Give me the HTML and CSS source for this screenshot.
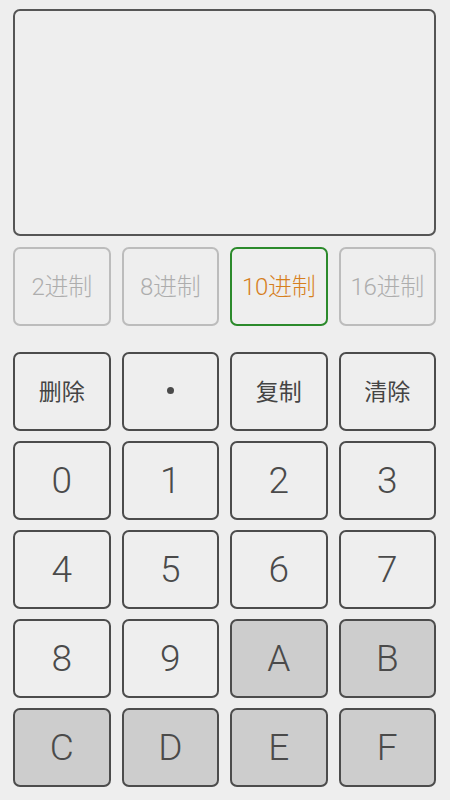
FILE: index.html
```html
<!DOCTYPE html>
<html lang="zh">
<head>
<meta charset="utf-8">
<link rel="stylesheet" href="styles.css">
</head>
<body>
<div class="app">
  <div class="display"></div>
  <div class="modes">
    <div class="mode">2进制</div>
    <div class="mode">8进制</div>
    <div class="mode active">10进制</div>
    <div class="mode">16进制</div>
  </div>
  <div class="keys">
    <div class="key cn">删除</div>
    <div class="key"><span class="dot"></span></div>
    <div class="key cn">复制</div>
    <div class="key cn">清除</div>
    <div class="key">0</div>
    <div class="key">1</div>
    <div class="key">2</div>
    <div class="key">3</div>
    <div class="key">4</div>
    <div class="key">5</div>
    <div class="key">6</div>
    <div class="key">7</div>
    <div class="key">8</div>
    <div class="key">9</div>
    <div class="key hex">A</div>
    <div class="key hex">B</div>
    <div class="key hex">C</div>
    <div class="key hex">D</div>
    <div class="key hex">E</div>
    <div class="key hex">F</div>
  </div>
</div>
</body>
</html>
```
FILE: styles.css
```css
html, body {
  margin: 0;
  padding: 0;
  background: #eeeeee;
}
body {
  width: 450px;
  height: 800px;
  overflow: hidden;
  font-family: Roboto, "Noto Sans CJK SC", sans-serif;
}
.app {
  padding: 9px 14px 0 13px;
}
.display {
  box-sizing: border-box;
  height: 227px;
  border: 2px solid #555555;
  border-radius: 7px;
}
.modes {
  margin-top: 11px;
  display: grid;
  grid-template-columns: repeat(4, 1fr);
  column-gap: 11px;
}
.mode {
  box-sizing: border-box;
  height: 79px;
  padding-bottom: 4px;
  border: 2px solid #bcbcbc;
  border-radius: 7px;
  display: flex;
  align-items: center;
  justify-content: center;
  font-size: 24px;
  font-weight: 300;
  color: #adadad;
  letter-spacing: -0.3px;
}
.mode.active {
  border-color: #2b8a2b;
  color: #d67f1e;
}
.keys {
  margin-top: 26px;
  display: grid;
  grid-template-columns: repeat(4, 1fr);
  gap: 10px 11px;
}
.key {
  box-sizing: border-box;
  height: 79px;
  border: 2px solid #4c4c4c;
  border-radius: 7px;
  display: flex;
  align-items: center;
  justify-content: center;
  font-size: 37px;
  font-weight: 300;
  color: #4a4a4a;
}
.key.cn {
  padding-bottom: 4px;
  font-size: 23px;
  font-weight: 400;
  color: #444444;
}
.key.hex {
  background: #cdcdcd;
}
.dot {
  width: 7px;
  height: 7px;
  margin-bottom: 3px;
  border-radius: 50%;
  background: #4a4a4a;
}
```
